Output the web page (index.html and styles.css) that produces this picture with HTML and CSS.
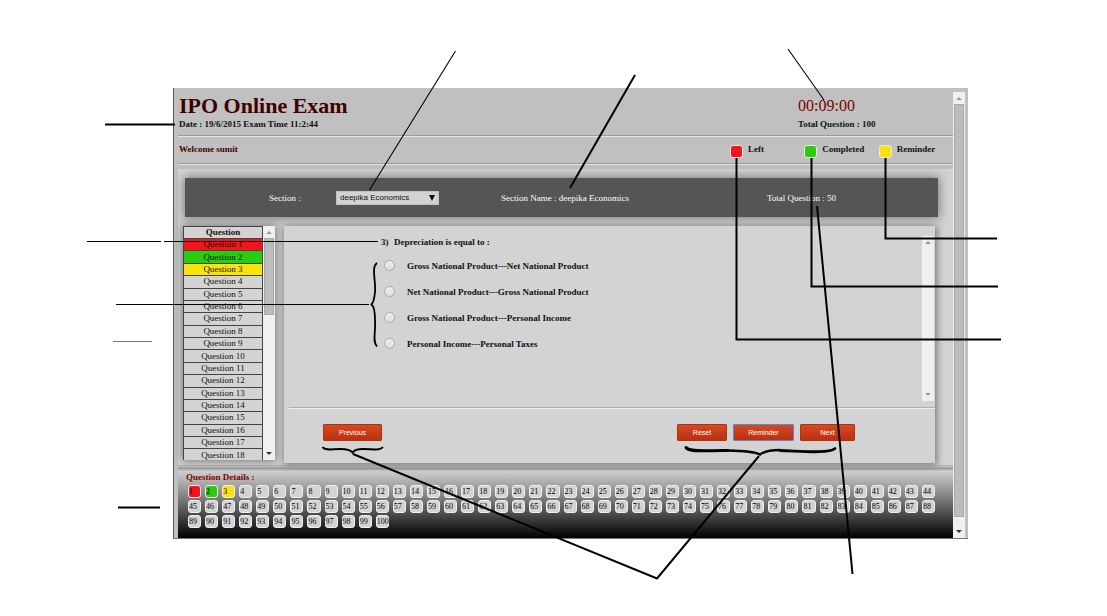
FILE: index.html
```html
<!DOCTYPE html>
<html lang="en">
<head>
<meta charset="utf-8">
<title>IPO Online Exam</title>
<link rel="stylesheet" href="styles.css">
</head>
<body>
<div class="stage">
<div class="frame">
  <main class="app">
    <header class="header">
      <div class="heading">
        <h1 class="title">IPO Online Exam</h1>
        <p class="meta">Date : 19/6/2015 Exam Time 11:2:44</p>
      </div>
      <div class="clock">
        <p class="timer">00:09:00</p>
        <p class="meta">Total Question : 100</p>
      </div>
    </header>
    <div class="welcome-row">
      <p class="welcome">Welcome sumit</p>
      <ul class="legend">
        <li><span class="swatch left"></span>Left</li>
        <li><span class="swatch done"></span>Completed</li>
        <li><span class="swatch remind"></span>Reminder</li>
      </ul>
    </div>
    <section class="content">
      <div class="section-bar">
        <label for="section">Section :</label>
        <div class="picker"><select id="section"><option>deepika Economics</option></select><span class="arrow down"></span></div>
        <span>Section Name : deepika Economics</span>
        <span>Total Question : 50</span>
      </div>
      <div class="columns">
        <div class="list">
          <div class="list-view">
            <table class="questions">
              <thead><tr><th>Question</th></tr></thead>
              <tbody id="question-rows"></tbody>
            </table>
          </div>
          <div class="scroll"><span class="arrow up pale"></span><span class="thumb short"></span><span class="arrow down"></span></div>
        </div>
        <form class="panel">
          <div class="question-area">
            <fieldset class="question">
              <legend><span class="number">3)</span>Depreciation is equal to :</legend>
              <label><input type="radio" name="answer">Gross National Product---Net National Product</label>
              <label><input type="radio" name="answer">Net National Product---Gross National Product</label>
              <label><input type="radio" name="answer">Gross National Product---Personal Income</label>
              <label><input type="radio" name="answer">Personal Income---Personal Taxes</label>
            </fieldset>
            <div class="scroll inner"><span class="arrow up pale"></span><span class="arrow down pale"></span></div>
          </div>
          <div class="actions">
            <button type="button" class="btn previous">Previous</button>
            <div class="group">
              <button type="reset" class="btn reset">Reset</button>
              <button type="button" class="btn reminder">Reminder</button>
              <button type="button" class="btn next">Next</button>
            </div>
          </div>
        </form>
      </div>
    </section>
    <section class="details">
      <h2 class="details-title">Question Details :</h2>
      <div class="numbers" id="numbers"></div>
    </section>
  </main>
  <div class="scroll page-scroll"><span class="arrow up pale"></span><span class="thumb"></span><span class="arrow down"></span></div>
</div>
<svg class="callouts" viewBox="0 0 1107 616" fill="none" stroke="#000" aria-hidden="true">
  <path stroke-width="1.1" d="M455.500 51L369.500 190M788 49L824 100"/>
  <path stroke-width="2" d="M635 75L570 188M105 124.500H175M118 507.500H160M736.500 158V339.500H1001M811.500 158V286.500H998M885.500 158V238.500H997M817 206L852.500 574M353 454L657 578.500L759 456"/>
  <path stroke-width="1" d="M87 241.500H161M164 241.500H378M116 304.500H369"/>
  <path stroke="#777" stroke-width="1" d="M113 341.500H152"/>
  <path stroke-width="1.800" d="M377 263C371 267 376 280 375 292Q374 302 371.500 304.500Q375 307 375 320C376 332 372 342 377 346.500"/>
  <path stroke-width="2" d="M322.500 447C325 451 332 449 340 449Q350 449 352.500 452.500Q355 449 363 449C373 449 380 451 383 447"/>
  <path stroke-width="3" stroke-linecap="round" d="M686 447.500C690 453 710 450 728 450.500"/>
  <path stroke-width="2.400" d="M728 450.500Q753 451 760 454.500Q766 450 780 450"/>
  <path stroke-width="2.800" stroke-linecap="round" d="M780 450.500C800 451 828 454 835 448.500"/>
</svg>
</div>
<script src="script.js"></script>
</body>
</html>
```
FILE: styles.css
```css
* { box-sizing: border-box; }
body {
  margin: 0;
  background: #fff;
  color: #111;
  font: 9px/12px "Liberation Serif", "Times New Roman", serif;
}
h1, h2, p, ul { margin: 0; padding: 0; }
.stage { position: relative; min-height: 100vh; padding: 88px 139px 78px 173px; }
.callouts { position: absolute; top: 0; left: 0; width: 100%; pointer-events: none; }
.frame {
  display: flex;
  background: #c0c0c0;
  border-left: 1px solid #555;
  border-bottom: 1px solid #777;
  padding: 0 3px 0 4px;
}
.app { flex: 1; min-width: 0; }

.header {
  display: flex;
  justify-content: space-between;
  padding: 6px 0 5px 1px;
  border-bottom: 1px solid #9c9c9c;
  box-shadow: 0 1px #e4e4e4;
}
.title { font-size: 22px; line-height: 24px; color: #400000; }
.meta { font-weight: bold; }
.clock { width: 155px; }
.timer { font-size: 16px; line-height: 24px; color: #800000; }

.welcome-row {
  display: flex;
  justify-content: space-between;
  padding: 7px 0 8px 1px;
  border-bottom: 1px solid #9c9c9c;
  box-shadow: 0 1px #e4e4e4;
  font-weight: bold;
}
.welcome { color: #400000; }
.legend { display: grid; grid-template-columns: repeat(3, 1fr); width: 223px; list-style: none; }
.legend li { display: flex; gap: 5px; height: 12px; }
.swatch { width: 13px; height: 13px; margin-top: 2px; border: 1px solid #e8e8e8; border-radius: 3px; }
.left { background: #f3141c; }
.done { background: #2bcb0d; }
.remind { background: #fae20c; }

.content {
  margin-top: 5px;
  padding: 9px 18px 2px 5px;
  background: #d3d3d3;
}
.section-bar {
  display: grid;
  grid-template-columns: 67fr 165fr 266fr 171fr;
  align-items: center;
  height: 39px;
  margin: 0 -3px 9px 2px;
  padding-left: 84px;
  background: #555;
  color: #fff;
  box-shadow: 0 0 10px 1px #777;
}
.picker { position: relative; width: 103px; height: 14px; }
.picker select {
  display: block;
  width: 100%;
  height: 14px;
  padding: 0 3px;
  appearance: none;
  background: #d3d3d3;
  border: 1px solid #c0c0c0;
  border-radius: 0;
  color: #111;
  font: 8px/12px "Liberation Sans", Arial, sans-serif;
}
.picker .arrow { position: absolute; right: 4px; top: 4px; }

.columns { display: flex; align-items: flex-start; gap: 9px; }
.list { display: flex; width: 92px; height: 234px; box-shadow: 0 0 9px 1px #777; }
.list-view { flex: 1; overflow: hidden; background: #d3d3d3; }
.questions { width: 100%; height: 236px; border-collapse: collapse; text-align: center; line-height: 11px; }
.questions th, .questions td { padding: 0; border: 1px solid #444; }

.scroll { display: flex; flex-direction: column; align-items: center; width: 12px; padding: 5px 0; background: #f0f0f0; }
.arrow { width: 0; height: 0; border: 0 solid transparent; }
.arrow.up { border-width: 0 3px 3px; border-bottom-color: #444; }
.arrow.down { border-width: 3px 3px 0; border-top-color: #333; margin-top: auto; }
.arrow.up.pale { border-bottom-color: #999; }
.arrow.down.pale { border-top-color: #999; }
.picker .arrow.down { border-width: 6px 3px 0; border-top-color: #111; margin: 0; }
.thumb { flex: 1; width: 10px; margin: 4px 0 13px; background: #bcbcbc; border: 1px solid #a8a8a8; }
.thumb.short { flex: 0 0 77px; margin-bottom: 0; }
.page-scroll { margin-top: 4px; }

.panel {
  flex: 1;
  min-width: 0;
  height: 237px;
  padding-left: 5px;
  background: #d3d3d3;
  box-shadow: 1px 1px 7px 1px #777;
}
.question-area {
  display: flex;
  justify-content: space-between;
  padding: 10px 1px 6px 0;
  border-bottom: 1px solid #b0b0b0;
  box-shadow: 0 1px #eee;
}
.question { display: flex; flex-direction: column; margin: 0; padding: 0 0 0 92px; border: 0; font-weight: bold; }
.question legend { display: block; padding: 0; margin-bottom: 5px; }
.number { display: inline-block; width: 13px; }
.question label { display: flex; align-items: center; height: 26px; }
.question input {
  appearance: none;
  width: 11px;
  height: 11px;
  margin: 0 12px 2px 3px;
  border: 1px solid #aaa;
  border-radius: 50%;
  background: linear-gradient(#eee, #ddd);
}
.inner { height: 165px; }
.actions { display: flex; justify-content: space-between; padding: 16px 80px 0 34px; }
.group { display: flex; gap: 6px; }
.btn {
  height: 17px;
  padding: 0;
  border: 1px solid #a93412;
  border-radius: 1px;
  background: linear-gradient(#d54a20, #bb3010);
  color: #fff;
  font: 7px/12px "Liberation Sans", Arial, sans-serif;
}
.previous { width: 59px; }
.reset { width: 50px; }
.btn.reminder { width: 61px; border-color: #5b84e0; }
.next { width: 55px; }

.details {
  padding: 6px 18px 10px 10px;
  background: linear-gradient(#8c8c8c 0, #d3d3d3 1px, #999 3px, #a4a4a4 4px, #cfcfcf 6px, #555 46px, #000 100%);
}
.details-title { margin-left: -2px; padding-bottom: 2px; font-size: 9px; line-height: 12px; color: #800000; }
.numbers { display: grid; grid-template-columns: repeat(44, minmax(0, 1fr)); gap: 2px 4px; }
.cell {
  height: 13px;
  padding: 0;
  border: 1px solid #eee;
  border-radius: 3px;
  background: #d3d3d3;
  color: #000;
  font: 8px/10px "Liberation Serif", "Times New Roman", serif;
  text-align: left;
}
.cell.left { background: #f3141c; }
.cell.done { background: #2bcb0d; }
.cell.remind { background: #fae20c; }
```
FILE: script.js
```js
const states = { 1: "left", 2: "done", 3: "remind" };

const rows = document.getElementById("question-rows");
for (let i = 1; i <= 18; i++) {
  const cell = rows.insertRow().insertCell();
  cell.textContent = "Question " + i;
  if (states[i]) cell.className = states[i];
}

const numbers = document.getElementById("numbers");
for (let i = 1; i <= 100; i++) {
  const button = document.createElement("button");
  button.type = "button";
  button.className = "cell " + (states[i] || "");
  button.textContent = i;
  numbers.append(button);
}
```
